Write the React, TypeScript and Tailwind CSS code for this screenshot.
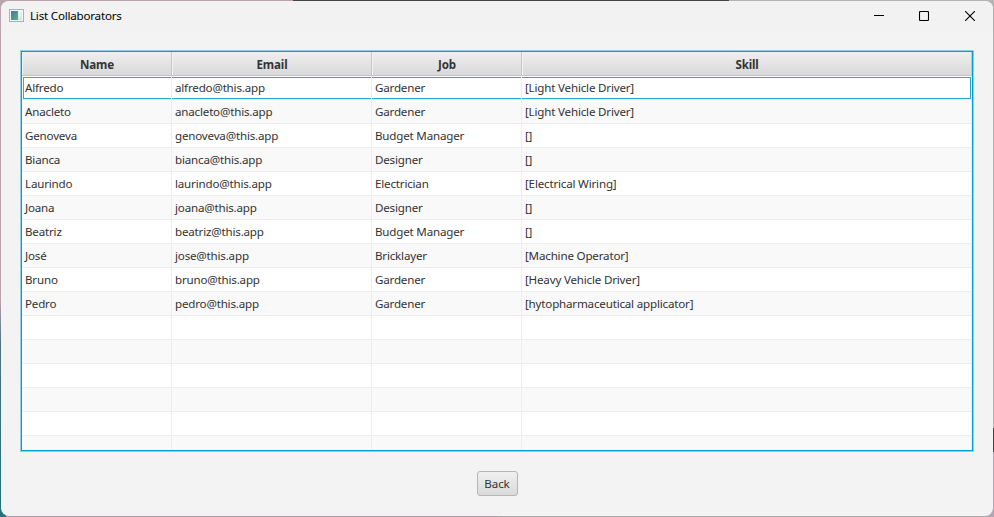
const columns = [
  { title: 'Name', cls: 'w-[150px]' },
  { title: 'Email', cls: 'w-[200px]' },
  { title: 'Job', cls: 'w-[150px]' },
  { title: 'Skill', cls: 'w-[450px]' },
];

const rows: string[][] = [
  ['Alfredo', 'alfredo@this.app', 'Gardener', '[Light Vehicle Driver]'],
  ['Anacleto', 'anacleto@this.app', 'Gardener', '[Light Vehicle Driver]'],
  ['Genoveva', 'genoveva@this.app', 'Budget Manager', '[]'],
  ['Bianca', 'bianca@this.app', 'Designer', '[]'],
  ['Laurindo', 'laurindo@this.app', 'Electrician', '[Electrical Wiring]'],
  ['Joana', 'joana@this.app', 'Designer', '[]'],
  ['Beatriz', 'beatriz@this.app', 'Budget Manager', '[]'],
  ['José', 'jose@this.app', 'Bricklayer', '[Machine Operator]'],
  ['Bruno', 'bruno@this.app', 'Gardener', '[Heavy Vehicle Driver]'],
  ['Pedro', 'pedro@this.app', 'Gardener', '[hytopharmaceutical applicator]'],
  ...Array.from({ length: 6 }, () => ['', '', '', '']),
];

function TitleBar() {
  return (
    <header className="flex h-[30px] shrink-0 items-center bg-[#f2f2f2] pl-2">
      <svg width="15" height="13" viewBox="0 0 15 13" shapeRendering="crispEdges" className="-mt-px shrink-0">
        <defs>
          <linearGradient id="app" x1="0" y1="0" x2="1" y2="1">
            <stop offset="0" stopColor="#4579a5" />
            <stop offset="1" stopColor="#5bb080" />
          </linearGradient>
          <linearGradient id="side" x1="0" y1="0" x2="0" y2="1">
            <stop offset="0" stopColor="#e9f2f4" />
            <stop offset="1" stopColor="#d5e9df" />
          </linearGradient>
        </defs>
        <rect x="0.5" y="0.5" width="14" height="12" fill="#f4f6f6" stroke="#a9b1b4" />
        <rect x="2" y="2" width="7" height="9" fill="url(#app)" />
        <rect x="9" y="2" width="4" height="9" fill="url(#side)" />
        <rect x="10" y="2" width="1" height="5" fill="#ffffff" />
      </svg>
      <h1 className="ml-1.5 text-[11.6px] leading-4 tracking-[-0.21px] text-black">List Collaborators</h1>
      <div className="ml-auto flex text-black">
        <button aria-label="Minimize" className="flex h-[30px] w-[45px] items-center justify-center">
          <svg width="10" height="10" viewBox="0 0 10 10"><path d="M0 4.5h10" stroke="currentColor" /></svg>
        </button>
        <button aria-label="Maximize" className="flex h-[30px] w-[46px] items-center justify-center">
          <svg width="10" height="10" viewBox="0 0 10 10" fill="none"><rect x="0.5" y="0.5" width="9" height="9" rx="1" stroke="currentColor" strokeWidth="1.1" /></svg>
        </button>
        <button aria-label="Close" className="flex h-[30px] w-[46px] items-center justify-center">
          <svg width="10" height="10" viewBox="0 0 10 10"><path d="M0 0l10 10M10 0L0 10" stroke="currentColor" strokeWidth="1.1" /></svg>
        </button>
      </div>
    </header>
  );
}

function Table() {
  return (
    <div className="h-[402px] w-[954px] shrink-0 border border-[#8dd0e6]">
      <div className="h-[400px] overflow-hidden border border-[#039ed3] bg-white">
        <div className="flex h-6 border-b border-[#c4c4c4] bg-linear-to-b from-[#efefef] to-[#d9d9d9]">
          {columns.map((c) => (
            <div key={c.title} className={`${c.cls} flex shrink-0 items-center justify-center border-r border-r-[#c6c6c6] border-l border-l-[#f3f3f3] pt-[3px] text-[11.6px] leading-4 font-bold tracking-[-0.15px] text-[#333]`}>
              {c.title}
            </div>
          ))}
        </div>
        {rows.map((r, i) => (
          <div key={i} className={`relative flex h-6 border-b border-[#ededed] ${i % 2 ? 'bg-[#f9f9f9]' : 'bg-white'}`}>
            {i === 0 && <div className="absolute top-px left-px h-[22px] w-[948px] border border-[#2ba9d2]" />}
            {r.map((text, j) => (
              <div key={j} className={`${columns[j].cls} relative shrink-0 overflow-hidden border-r border-[#ededed] pl-[3px] text-[11.6px] leading-6 tracking-[-0.19px] whitespace-nowrap text-[#333]`}>
                {text}
              </div>
            ))}
          </div>
        ))}
      </div>
    </div>
  );
}

export default function App() {
  return (
    <div className="h-[517px] w-[994px] overflow-hidden bg-[linear-gradient(to_right,#b9a3ad_293px,#444_293px,#444_729px,#b4b4b4_729px)] font-['Noto_Sans','Open_Sans',sans-serif]">
      <div className="h-full bg-[linear-gradient(to_right,#b09aa5_50%,#aaa_50%)] bg-[length:100%_516px] bg-[position:0_1px] bg-no-repeat">
        <div className="flex h-full bg-[linear-gradient(#b9a3ad_0_300px,#4a7080_345px,#287080)] bg-[length:6px_100%] bg-no-repeat">
          <div className="h-full w-full bg-[linear-gradient(#b4b4b4_0_428px,#444_428px_452px,#b5a6b3_452px)] bg-[length:6px_100%] bg-right bg-no-repeat pt-px pr-px pb-px pl-px">
            <div className="flex h-[515px] w-[992px] flex-col overflow-hidden rounded-lg bg-[#f3f3f3]">
              <TitleBar />
              <main className="flex flex-col items-center pt-[19px]">
                <Table />
                <button className="mt-[19px] h-[25px] w-[41px] rounded-[3px] border border-[#b5b5b5] bg-linear-to-b from-[#f0f0f0] to-[#dadada] text-[11.6px] leading-[23px] tracking-[-0.1px] text-[#333]">
                  Back
                </button>
              </main>
            </div>
          </div>
        </div>
      </div>
    </div>
  );
}
